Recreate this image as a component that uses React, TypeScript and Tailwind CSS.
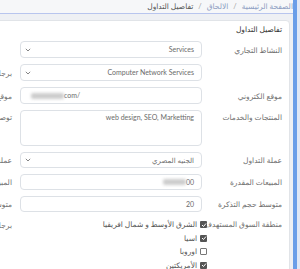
import React from "react";

const Chevron = () => (
  <svg width="6" height="4" viewBox="0 0 6 4" className="shrink-0">
    <path d="M0.8 0.8 L3 3 L5.2 0.8" fill="none" stroke="#777" strokeWidth="0.9" />
  </svg>
);

const Check = ({ on }: { on: boolean }) =>
  on ? (
    <span className="w-[7px] h-[7px] bg-[#555] rounded-[1px] flex items-center justify-center shrink-0">
      <svg width="6" height="6" viewBox="0 0 6 6">
        <path d="M1 3 L2.5 4.5 L5 1.5" fill="none" stroke="#fff" strokeWidth="1" />
      </svg>
    </span>
  ) : (
    <span className="w-[7px] h-[7px] bg-white border border-[#777] rounded-[1px] shrink-0" />
  );

type LP = { children?: React.ReactNode; short?: boolean; tight?: boolean };

const Label = ({ children, short = false, tight = false }: LP) => (
  <div
    className={`w-[80px] shrink-0 ${tight ? "pt-0" : "pt-[2px]"} ${short ? "leading-[14px]" : "leading-[15px]"} text-[7.5px] text-[#6f6f6f] whitespace-nowrap`}
  >
    {children}
  </div>
);

const LeftLabel = ({ children, short = false, tight = false }: LP) => (
  <div
    className={`w-[90px] shrink-0 ${tight ? "pt-0" : "pt-[2px]"} ${short ? "leading-[14px]" : "leading-[15px]"} text-[7.5px] text-[#6f6f6f] whitespace-nowrap mr-[8px]`}
  >
    {children}
  </div>
);

const Box = ({ children, h = "h-[17px]", cls = "" }: { children?: React.ReactNode; h?: string; cls?: string }) => (
  <div className={`w-[182px] shrink-0 ${h} border border-[#dde1e6] rounded-[4px] bg-white text-[7px] text-[#6b6b6b] ${cls}`}>
    {children}
  </div>
);

const SelectBox = ({ text, h = "h-[17px]" }: { text: string; h?: string }) => (
  <Box h={h} cls="flex items-center justify-between pr-[7px] pl-[4px]">
    <span>{text}</span>
    <Chevron />
  </Box>
);

const LeftBox = ({ h = "h-[17px]" }: { h?: string }) => (
  <div className={`w-[182px] shrink-0 ${h} border border-[#dde1e6] rounded-[4px] bg-white`} />
);

const options: [string, boolean][] = [
  ["الشرق الأوسط و شمال افريقيا", true],
  ["اسيا", true],
  ["اوروبا", false],
  ["الأمريكتين", true],
];

export default function App() {
  return (
    <div
      dir="rtl"
      className="w-[300px] h-[269px] overflow-hidden flex bg-[#eef0f4] [font-family:Lato,'DejaVu_Sans',sans-serif]"
    >
      {/* right strip */}
      <div className="flex shrink-0 h-full">
        <div className="w-[3px] bg-[#dfe7f5]" />
        <div className="w-[4px] bg-[#6a9ee8]" />
      </div>

      {/* main column */}
      <div className="flex-1 min-w-0 flex flex-col">
        <div className="h-[14px] shrink-0 bg-[#f6f7f9] border-b border-[#b8c5ee] flex items-center text-[7.5px] whitespace-nowrap">
          <span className="text-[#8c9dc2]">الصفحة الرئيسية</span>
          <span className="text-[#a0a0a0] mx-[5px]">/</span>
          <span className="text-[#8c9dc2]">الالحاق</span>
          <span className="text-[#a0a0a0] mx-[5px]">/</span>
          <span className="text-[#555]">تفاصيل التداول</span>
        </div>

        <div className="flex-1 pt-[6px] pr-[3px]">
          <div className="w-[600px] bg-white border border-[#e1e4e8] rounded-tr-[4px] pb-[10px]">
            <div className="pr-[7px] pt-[3px] leading-[11px] text-[7.5px] text-[#333] font-medium">
              تفاصيل التداول
            </div>

            <div className="mt-[6px] pr-[7px] flex flex-col gap-[6px]">
              {/* row 1 */}
              <div className="flex items-start">
                <Label>النشاط التجاري</Label>
                <SelectBox text="Services" />
                <LeftLabel />
                <LeftBox />
              </div>
              {/* row 2 */}
              <div className="flex items-start">
                <Label />
                <SelectBox text="Computer Network Services" />
                <LeftLabel>برجاء اختيار</LeftLabel>
                <LeftBox />
              </div>
              {/* row 3 */}
              <div className="flex items-start">
                <Label>موقع الكتروني</Label>
                <Box cls="flex items-center pl-[10px]">
                  <div dir="ltr" className="flex items-center w-full">
                    <span className="w-[33px] h-[6px] bg-[#cdcdcd] rounded-[2px] blur-[1.5px]" />
                    <span>com/</span>
                  </div>
                </Box>
                <LeftLabel>موقع التواصل</LeftLabel>
                <LeftBox />
              </div>
              {/* row 4 */}
              <div className="flex items-start">
                <Label tight>المنتجات والخدمات</Label>
                <Box h="h-[36px]" cls="pr-[7px] pt-[1px] leading-[10px]">
                  web design, SEO, Marketting
                </Box>
                <LeftLabel tight>توصيف النشاط</LeftLabel>
                <LeftBox h="h-[36px]" />
              </div>
              {/* row 5 */}
              <div className="flex items-start">
                <Label short>عملة التداول</Label>
                <SelectBox text="الجنيه المصري" h="h-[16px]" />
                <LeftLabel short>عملة البيع</LeftLabel>
                <LeftBox h="h-[16px]" />
              </div>
              {/* row 6 */}
              <div className="flex items-start">
                <Label short>المبيعات المقدرة</Label>
                <Box h="h-[16px]" cls="flex items-center pr-[7px]">
                  <div dir="ltr" className="flex items-center">
                    <span className="w-[23px] h-[6px] bg-[#cdcdcd] rounded-[2px] blur-[1.5px]" />
                    <span>00</span>
                  </div>
                </Box>
                <LeftLabel short>المبيعات الشهرية</LeftLabel>
                <LeftBox h="h-[16px]" />
              </div>
              {/* row 7 */}
              <div className="flex items-start">
                <Label short>متوسط حجم التذكرة</Label>
                <Box h="h-[16px]" cls="flex items-center pr-[7px]">
                  <span>20</span>
                </Box>
                <LeftLabel short>متوسط الطلب</LeftLabel>
                <LeftBox h="h-[16px]" />
              </div>
              {/* row 8 */}
              <div className="flex items-start">
                <div className="w-[75px] shrink-0 leading-[13.5px] text-[7.5px] text-[#6f6f6f] whitespace-nowrap">
                  منطقة السوق المستهدف
                </div>
                <div className="w-[187px] shrink-0 flex flex-col text-[7.5px] text-[#555]">
                  {options.map(([t, on]) => (
                    <div key={t} className="h-[13.5px] flex items-center gap-[3px] whitespace-nowrap">
                      <Check on={on} />
                      <span>{t}</span>
                    </div>
                  ))}
                </div>
                <div className="w-[90px] shrink-0 leading-[13.5px] pt-[1px] text-[7.5px] text-[#6f6f6f] whitespace-nowrap mr-[8px]">
                  برجاء تحديد
                </div>
              </div>
            </div>
          </div>
        </div>
      </div>
    </div>
  );
}
